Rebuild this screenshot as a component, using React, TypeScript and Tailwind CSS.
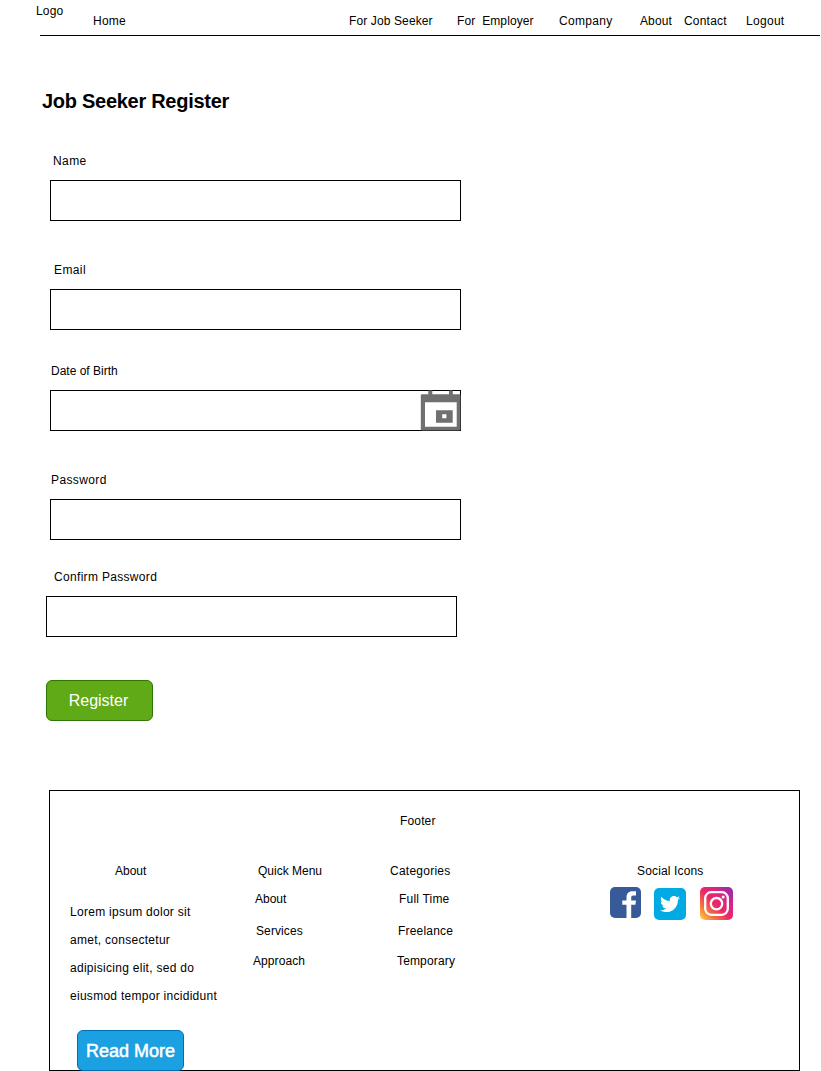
import { FaTwitter } from "react-icons/fa";

const navItems = [
  { label: "Home", className: "w-[256px] tracking-[0.25px]" },
  { label: "For Job Seeker", className: "w-[108px] tracking-[0.12px]" },
  { label: "For  Employer", className: "w-[102px] tracking-[0.1px]" },
  { label: "Company", className: "w-[81px] tracking-[0.3px]" },
  { label: "About", className: "w-[44px] tracking-[0.1px]" },
  { label: "Contact", className: "w-[62px] tracking-[0.2px]" },
  { label: "Logout", className: "tracking-[0.3px]" },
];

function Header() {
  return (
    <header className="flex h-9 items-start">
      <div className="w-14 shrink-0 pl-9 pt-1 tracking-[0.2px]">Logo</div>
      <nav className="-ml-4 flex h-9 w-[780px] shrink-0 border-b border-black pl-[53px] pt-3.5">
        {navItems.map((item) => (
          <a key={item.label} className={`block shrink-0 whitespace-pre ${item.className}`}>
            {item.label}
          </a>
        ))}
      </nav>
    </header>
  );
}

function CalendarIcon() {
  return (
    <svg width="41" height="41" viewBox="0 0 41 41" className="-my-px -mr-px block shrink-0">
      <g fill="#707070">
        <path d="M8.3 0.500h4v5h-4zM29 0.500h3.800v5H29z" />
        <path
          fillRule="evenodd"
          d="M2 4.200h37.300q1.200 0 1.200 1.200v33.800q0 1.200-1.200 1.200H2q-1.200 0-1.200-1.200V5.400q0-1.200 1.200-1.200zM5 12.200v24.600h31.700V12.200z"
        />
        <path fillRule="evenodd" d="M16 20.300h16.700v12.400H16zM22.200 24.300v4h4.200v-4z" />
      </g>
    </svg>
  );
}

const fields = [
  { label: "Name", type: "text", group: "h-[109px]", text: "pl-[3px] tracking-[0.4px]" },
  { label: "Email", type: "email", group: "h-[101px]", text: "pl-[4px] tracking-[0.4px]" },
  { label: "Date of Birth", type: "text", group: "h-[109px]", text: "pl-px", calendar: true },
  { label: "Password", type: "password", group: "h-[97px]", text: "pl-px tracking-[0.38px]" },
  { label: "Confirm Password", type: "password", group: "-ml-1 h-[110px]", text: "pl-2 tracking-[0.32px]" },
];

function RegisterForm() {
  return (
    <main className="pt-[55px]">
      <h1 className="ml-[42px] h-[63px] text-xl font-bold leading-5 tracking-[-0.28px]">
        Job Seeker Register
      </h1>
      <form className="ml-[50px] w-[411px]">
        {fields.map((field) => (
          <label key={field.label} className={`block ${field.group}`}>
            <span className={`block h-[26px] ${field.text}`}>{field.label}</span>
            <span className="flex h-[41px] w-[411px] border border-black">
              <input type={field.type} className="min-w-0 flex-1 px-3 outline-none" />
              {field.calendar && <CalendarIcon />}
            </span>
          </label>
        ))}
        <button
          type="button"
          className="-ml-1 block h-[41px] w-[107px] rounded-md border border-[#2d7600] bg-[#60a917] pr-0.5 text-base text-white"
        >
          Register
        </button>
      </form>
    </main>
  );
}

function SocialIcons() {
  return (
    <div className="-ml-[27px] mt-[9px] flex items-start">
      <svg width="31" height="31" viewBox="0 0 31 31">
        <rect width="31" height="31" rx="5" fill="#395a98" />
        <path
          fill="#fff"
          d="M16.500 31V17.800h-4.200v-4.200h4.200v-3.100c0-4 2.300-6.200 5.800-6.200H26v4.200h-2.500c-1.800 0-2.300.8-2.300 2.500v2.600H26l-.6 4.200h-4.200V31z"
        />
      </svg>
      <div className="ml-[13px] mt-px flex h-8 w-8 items-center justify-center rounded-[5px] bg-[#00aae3] text-white">
        <FaTwitter size={20} />
      </div>
      <svg width="33" height="33" viewBox="0 0 33 33" className="ml-3.5">
        <defs>
          <linearGradient id="instagram" x1="0" y1="1" x2="1" y2="0">
            <stop offset="0" stopColor="#ffd84d" />
            <stop offset="0.22" stopColor="#f77a39" />
            <stop offset="0.48" stopColor="#eb2768" />
            <stop offset="0.72" stopColor="#d92586" />
            <stop offset="1" stopColor="#8729b5" />
          </linearGradient>
        </defs>
        <rect width="33" height="33" rx="5" fill="url(#instagram)" />
        <g fill="none" stroke="#fff" strokeWidth="2.300">
          <rect x="5.200" y="5.200" width="22.600" height="22.600" rx="6" />
          <circle cx="16.500" cy="16.700" r="5.700" />
        </g>
        <circle cx="23.200" cy="10" r="1.500" fill="#fff" />
      </svg>
    </div>
  );
}

function Footer() {
  return (
    <footer className="ml-[49px] mt-[69px] h-[281px] w-[751px] border border-black pt-[23px]">
      <p className="h-[50px] pl-[350px] tracking-[0.15px]">Footer</p>
      <div className="flex items-start">
        <section className="w-[203px] shrink-0 pl-5">
          <h2 className="h-[34px] pl-[45px]">About</h2>
          <p className="h-[132px] leading-7 tracking-[0.28px]">
            Lorem ipsum dolor sit
            <br />
            amet, consectetur
            <br />
            adipisicing elit, sed do
            <br />
            eiusmod tempor incididunt
          </p>
          <button
            type="button"
            className="ml-[7px] block h-[41px] w-[107px] whitespace-nowrap rounded-md border border-[#006eaf] bg-[#1ba1e2] text-lg text-white [-webkit-text-stroke:0.5px_white]"
          >
            Read More
          </button>
        </section>
        <section className="w-[137px] shrink-0">
          <h2 className="h-7 pl-[5px]">Quick Menu</h2>
          <ul>
            <li className="h-8 pl-[2px]">About</li>
            <li className="h-[30px] pl-[3px] tracking-[0.1px]">Services</li>
            <li className="tracking-[0.08px]">Approach</li>
          </ul>
        </section>
        <section className="w-[247px] shrink-0">
          <h2 className="h-7 tracking-[0.25px]">Categories</h2>
          <ul>
            <li className="h-8 pl-[9px] tracking-[0.2px]">Full Time</li>
            <li className="h-[30px] pl-2 tracking-[0.2px]">Freelance</li>
            <li className="pl-[7px] tracking-[0.15px]">Temporary</li>
          </ul>
        </section>
        <section className="shrink-0">
          <h2 className="tracking-[0.15px]">Social Icons</h2>
          <SocialIcons />
        </section>
      </div>
    </footer>
  );
}

export default function App() {
  return (
    <div className="h-[1071px] w-[821px] overflow-hidden bg-white font-['Liberation_Sans',Arial,sans-serif] text-xs leading-[14px] text-black">
      <Header />
      <RegisterForm />
      <Footer />
    </div>
  );
}
